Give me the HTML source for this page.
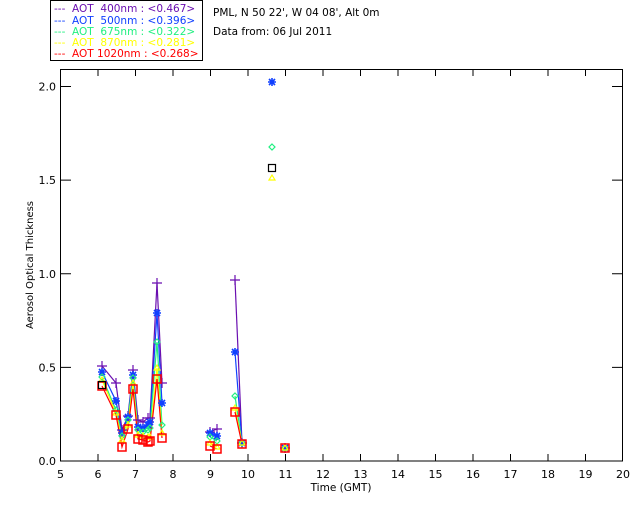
<!DOCTYPE html>
<html><head><meta charset="utf-8"><style>
html,body{margin:0;padding:0;background:#fff;width:640px;height:512px;overflow:hidden}
svg{display:block;font-family:"DejaVu Sans","Liberation Sans",sans-serif}
</style></head><body>
<svg id="s" width="640" height="512" xmlns="http://www.w3.org/2000/svg">
<rect x="50.5" y="0.5" width="152" height="60" fill="none" stroke="#000"/>
<g font-size="10.5">
<text x="54" y="12" fill="#6a0fb0" xml:space="preserve">---  AOT  400nm : &lt;0.467&gt;</text>
<text x="54" y="24" fill="#1040ff" xml:space="preserve">---  AOT  500nm : &lt;0.396&gt;</text>
<text x="54" y="35" fill="#20f080" xml:space="preserve">---  AOT  675nm : &lt;0.322&gt;</text>
<text x="54" y="46" fill="#ffff00" xml:space="preserve">---  AOT  870nm : &lt;0.281&gt;</text>
<text x="54" y="57" fill="#ff0000" xml:space="preserve">---  AOT 1020nm : &lt;0.268&gt;</text>
<text x="213" y="16" fill="#000">PML, N 50 22', W 04 08', Alt 0m</text>
<text x="213" y="35" fill="#000">Data from: 06 Jul 2011</text>
</g>
<rect x="60.5" y="69.5" width="562" height="391.5" fill="none" stroke="#000"/>
<g id="ax" stroke="#000"></g>
<g id="ln" fill="none" stroke-width="1.2"></g>
<g id="mk" fill="none" stroke-width="1.2"></g>
<g font-size="11" fill="#000" id="lb"></g>
<text x="341" y="491" font-size="10.5" text-anchor="middle">Time (GMT)</text>
<text transform="translate(33,265) rotate(-90)" font-size="10" text-anchor="middle">Aerosol Optical Thickness</text>
</svg>
<script>
var NS="http://www.w3.org/2000/svg";
function el(p,t,a,txt){var e=document.createElementNS(NS,t);for(var k in a)e.setAttribute(k,a[k]);if(txt!=null)e.textContent=txt;document.getElementById(p).appendChild(e);return e;}
for(var h=5;h<=20;h++){var x=60.5+(h-5)*37.5;
 if(h>5&&h<20){el('ax','line',{x1:x,y1:461,x2:x,y2:454});el('ax','line',{x1:x,y1:69.5,x2:x,y2:76});}
 el('lb','text',{x:x,y:478,'text-anchor':'middle'},h);}
for(var i=0;i<=4;i++){var y=461-i*0.5*187.25;
 if(i>0){el('ax','line',{x1:60.5,y1:y,x2:71,y2:y});el('ax','line',{x1:622.5,y1:y,x2:612,y2:y});}
 el('lb','text',{x:56,y:y+4,'text-anchor':'end'},(i*0.5).toFixed(1));}
var segs=[[0,11],[11,13],[13,15],[15,16]];
var xs=[102,116,122,129,133,139,144,150,150,157,162,210,217,235,242,285];
xs=[102,116,122,128,133,138,143,148,150,157,162,210,217,235,242,285];
var S=[
 ['#6a0fb0','plus',[366,383,430,416,370,420,422,418,418,283,383,432,429,280,443,448]],
 ['#1040ff','star',[372,401,433,417,375,427,428,425,422,313,403,433,436,352,443,448]],
 ['#20f080','dia',[377,410,436,420,378,430,432,430,428,342,425,437,441,396,443,448]],
 ['#ffff00','tri',[380,413,440,425,383,435,436,437,437,368,433,443,447,408,443,448]],
 ['#ff0000','sq',[386,415,447,429,389,439,440,442,441,379,438,446,449,412,444,448]]];
S.forEach(function(s){var c=s[0],ys=s[2];
 segs.forEach(function(g){var p=[];for(var i=g[0];i<g[1];i++)p.push(xs[i]+','+ys[i]);
  if(p.length>1)el('ln','polyline',{points:p.join(' '),stroke:c});});
 for(var i=0;i<xs.length;i++)mark(s[1],xs[i],ys[i],c);});
function mark(t,x,y,c){
 if(t=='plus'){el('mk','path',{d:'M'+(x-5)+' '+y+'h10M'+x+' '+(y-5)+'v10',stroke:c});}
 else if(t=='star'){el('mk','path',{d:'M'+(x-4)+' '+y+'h8M'+x+' '+(y-4)+'v8M'+(x-3)+' '+(y-3)+'l6 6M'+(x+3)+' '+(y-3)+'l-6 6',stroke:c,'stroke-width':1.6});}
 else if(t=='dia'){el('mk','path',{d:'M'+x+' '+(y-3)+'l3 3l-3 3l-3 -3z',stroke:c});}
 else if(t=='tri'){el('mk','path',{d:'M'+x+' '+(y-3)+'l3 5h-6z',stroke:c});}
 else {el('mk','rect',{x:x-4,y:y-4,width:8,height:8,stroke:c,'stroke-width':1.5});}}
mark('star',272,82,'#1040ff');mark('dia',272,147,'#20f080');
el('mk','rect',{x:268.5,y:164.5,width:7,height:7,stroke:'#000'});
mark('tri',272,178,'#ffff00');
el('mk','rect',{x:98.5,y:381.5,width:7,height:7,stroke:'#000'});
</script>
</body></html>
